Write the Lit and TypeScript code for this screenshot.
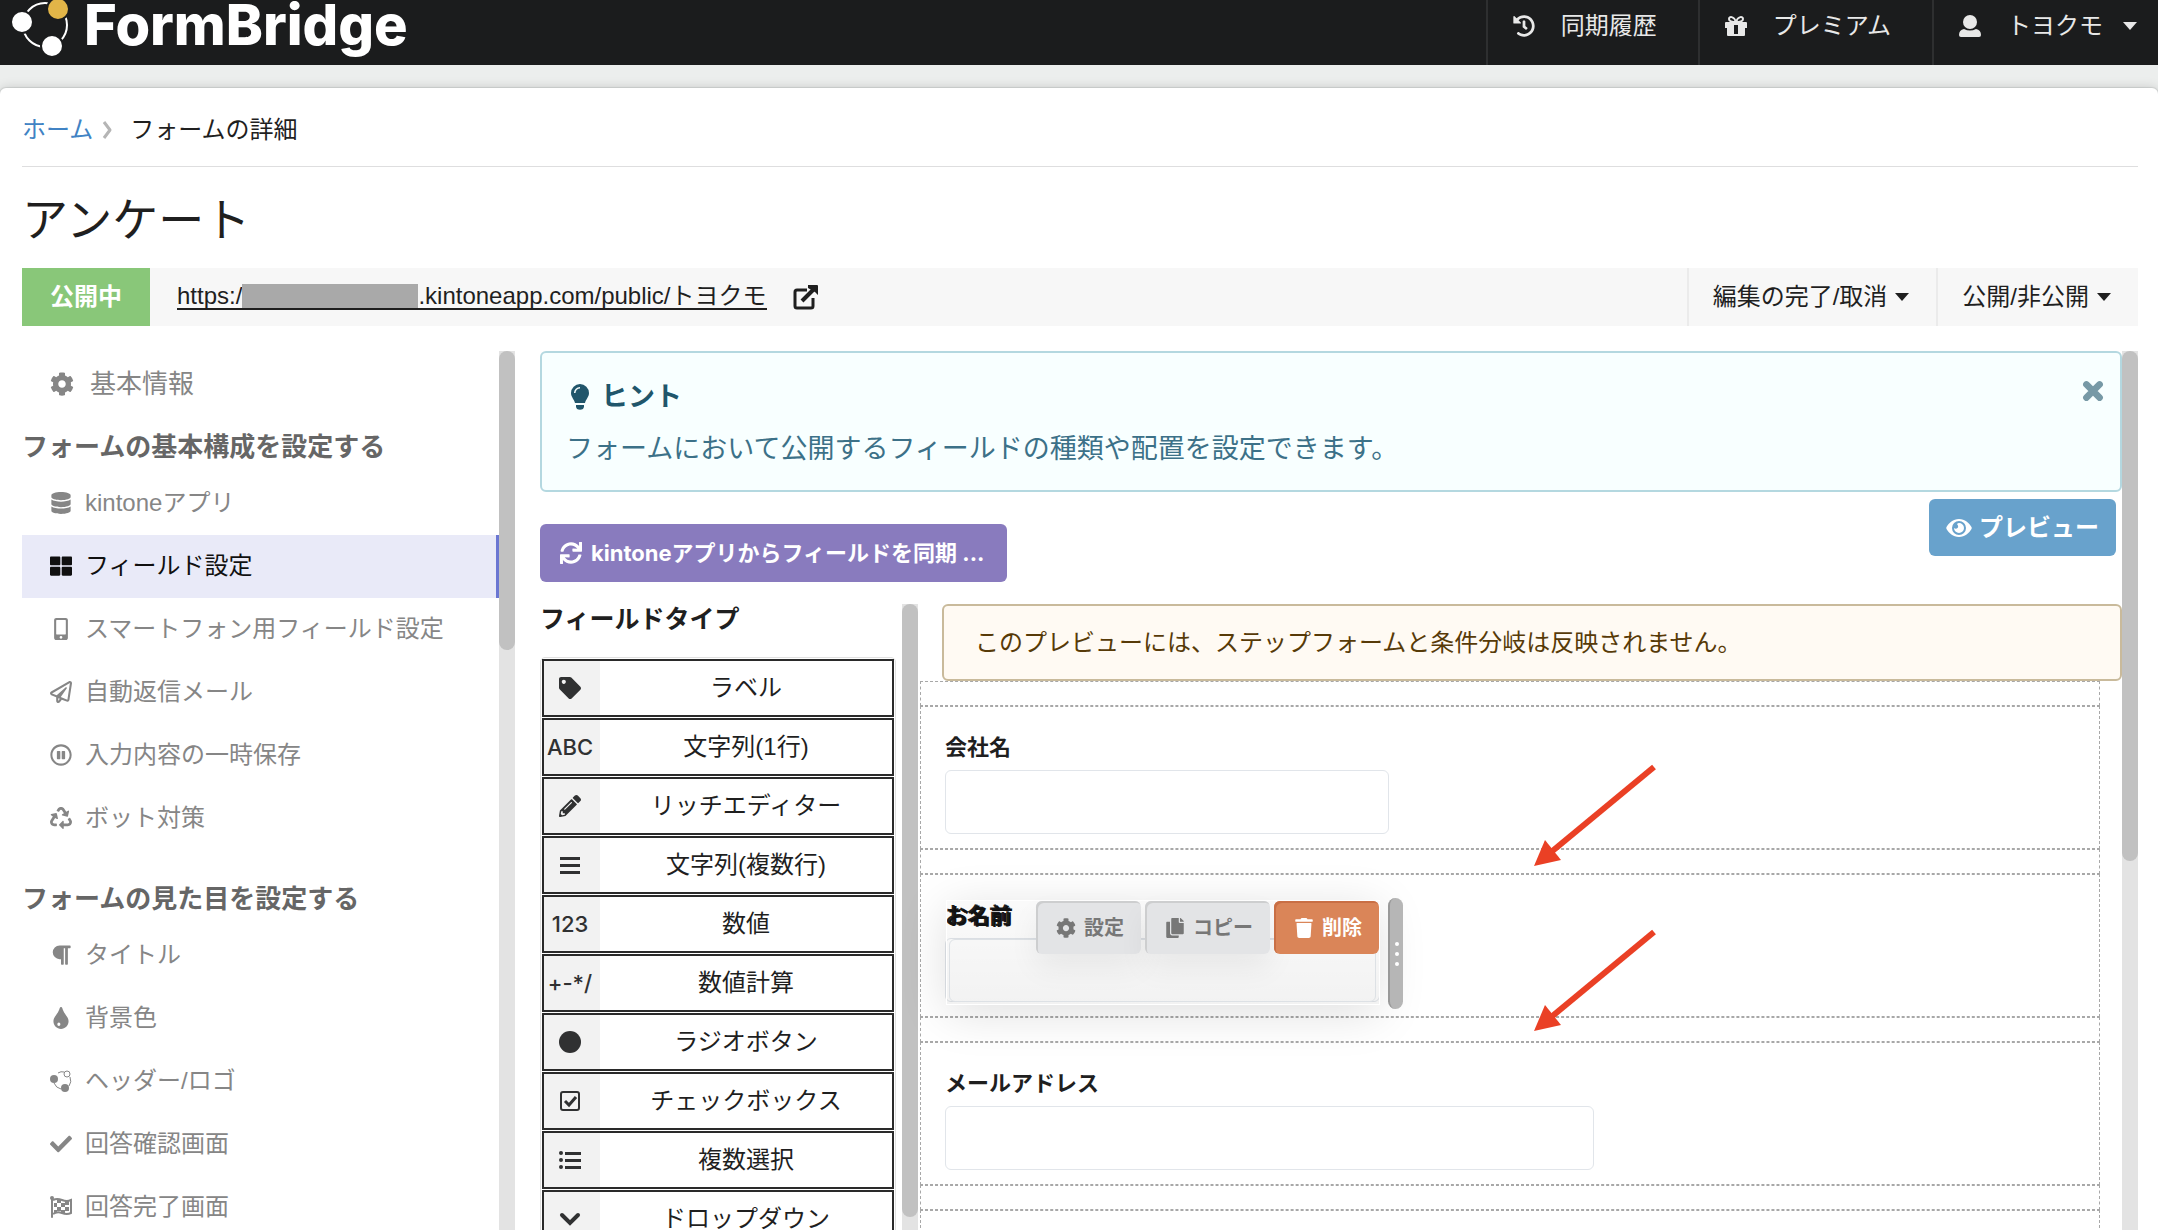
import { LitElement, html, css, svg, nothing, type TemplateResult, type SVGTemplateResult } from "lit";
import { customElement, property } from "lit/decorators.js";
import { classMap } from "lit/directives/class-map.js";

interface Glyph {
  box: string;
  body: SVGTemplateResult;
}

const COG =
  "M487.4 315.7l-42.6-24.6c4.3-23.2 4.3-47 0-70.2l42.6-24.6c4.9-2.8 7.1-8.6 5.5-14-11.1-35.6-30-67.8-54.7-94.6-3.8-4.1-10-5.1-14.8-2.3L380.8 110c-17.9-15.4-38.5-27.3-60.8-35.1V25.8c0-5.6-3.9-10.5-9.4-11.7-36.7-8.2-74.3-7.8-109.2 0-5.5 1.2-9.4 6.1-9.4 11.7V75c-22.2 7.9-42.8 19.8-60.8 35.1L88.7 85.5c-4.9-2.8-11-1.9-14.8 2.3-24.7 26.7-43.6 58.9-54.7 94.6-1.7 5.4.6 11.2 5.5 14L67.3 221c-4.3 23.2-4.3 47 0 70.2l-42.6 24.6c-4.9 2.8-7.1 8.6-5.5 14 11.1 35.6 30 67.8 54.7 94.6 3.8 4.1 10 5.1 14.8 2.3l42.6-24.6c17.9 15.4 38.5 27.3 60.8 35.1v49.2c0 5.6 3.9 10.5 9.4 11.7 36.7 8.2 74.3 7.8 109.2 0 5.5-1.2 9.4-6.1 9.4-11.7v-49.2c22.2-7.9 42.8-19.8 60.8-35.1l42.6 24.6c4.9 2.8 11 1.9 14.8-2.3 24.7-26.7 43.6-58.9 54.7-94.6 1.5-5.5-.7-11.3-5.6-14.1zM256 336c-44.1 0-80-35.9-80-80s35.9-80 80-80 80 35.9 80 80-35.9 80-80 80z";

const glyphs: Record<string, Glyph> = {
  cog: { box: "0 0 512 512", body: svg`<path d=${COG} />` },
  database: {
    box: "0 0 448 512",
    body: svg`<path d="M448 73.143v45.714C448 159.143 347.667 192 224 192S0 159.143 0 118.857V73.143C0 32.857 100.333 0 224 0s224 32.857 224 73.143zM448 176v102.857C448 319.143 347.667 352 224 352S0 319.143 0 278.857V176c48.125 33.143 136.208 48.572 224 48.572S399.874 209.143 448 176zm0 160v102.857C448 479.143 347.667 512 224 512S0 479.143 0 438.857V336c48.125 33.143 136.208 48.572 224 48.572S399.874 369.143 448 336z" />`,
  },
  blocks: {
    box: "0 0 512 512",
    body: svg`<path d="M296 32h192c13.255 0 24 10.745 24 24v160c0 13.255-10.745 24-24 24H296c-13.255 0-24-10.745-24-24V56c0-13.255 10.745-24 24-24zm-80 0H24C10.745 32 0 42.745 0 56v160c0 13.255 10.745 24 24 24h192c13.255 0 24-10.745 24-24V56c0-13.255-10.745-24-24-24zM0 296v160c0 13.255 10.745 24 24 24h192c13.255 0 24-10.745 24-24V296c0-13.255-10.745-24-24-24H24c-13.255 0-24 10.745-24 24zm296 184h192c13.255 0 24-10.745 24-24V296c0-13.255-10.745-24-24-24H296c-13.255 0-24 10.745-24 24v160c0 13.255 10.745 24 24 24z" />`,
  },
  phone: {
    box: "0 0 320 512",
    body: svg`<path d="M272 0H48C21.5 0 0 21.5 0 48v416c0 26.5 21.5 48 48 48h224c26.5 0 48-21.5 48-48V48c0-26.5-21.5-48-48-48zM160 480c-17.7 0-32-14.3-32-32s14.3-32 32-32 32 14.3 32 32-14.3 32-32 32zm112-108c0 6.600-5.4 12-12 12H60c-6.6 0-12-5.4-12-12V60c0-6.600 5.4-12 12-12h200c6.600 0 12 5.4 12 12v312z" />`,
  },
  plane: {
    box: "0 0 512 512",
    body: svg`<path d="M440 6.5L24 246.4c-34.4 19.9-31.1 70.8 5.7 85.9L144 379.6V464c0 46.4 59.2 65.5 86.6 28.6l43.8-59.1 111.9 46.2c5.9 2.4 12.1 3.6 18.3 3.6 8.2 0 16.3-2.1 23.6-6.2 12.8-7.2 21.6-20 23.9-34.5l59.4-387.2c6.1-40.1-36.9-68.8-71.5-48.9zM192 464v-64.6l36.6 15.1L192 464zm212.6-28.7l-153.8-63.5L391 169.5c10.7-15.5-9.5-33.5-23.7-21.2L155.8 332.6 48 288 464 48l-59.4 387.3z" />`,
  },
  pause: {
    box: "0 0 512 512",
    body: svg`<path d="M256 8C119 8 8 119 8 256s111 248 248 248 248-111 248-248S393 8 256 8zm0 448c-110.5 0-200-89.5-200-200S145.5 56 256 56s200 89.5 200 200-89.5 200-200 200zm96-280v160c0 8.800-7.2 16-16 16h-48c-8.8 0-16-7.2-16-16V176c0-8.800 7.2-16 16-16h48c8.800 0 16 7.2 16 16zm-112 0v160c0 8.800-7.2 16-16 16h-48c-8.8 0-16-7.2-16-16V176c0-8.800 7.2-16 16-16h48c8.800 0 16 7.2 16 16z" />`,
  },
  recycle: {
    box: "0 0 512 512",
    body: svg`<path d="M184.561 261.903c3.232 13.997-12.123 24.635-24.068 17.168l-40.736-25.455-50.867 81.402C55.606 356.273 70.96 384 96.012 384H148c6.627 0 12 5.373 12 12v40c0 6.627-5.373 12-12 12H96.115c-75.334 0-121.302-83.048-81.408-146.88l50.822-81.388-40.725-25.448c-12.081-7.547-8.966-25.961 4.879-29.158l110.237-25.45c8.611-1.988 17.201 3.381 19.189 11.99l25.452 110.237zm98.561-182.915l41.289 66.076-40.74 25.457c-12.051 7.528-9 25.953 4.879 29.158l110.237 25.45c8.672 1.999 17.215-3.438 19.189-11.99l25.45-110.237c3.197-13.844-11.99-24.719-24.068-17.168l-40.687 25.424-41.263-66.082c-37.521-60.033-125.209-60.171-162.816 0l-17.963 28.766c-3.51 5.62-1.8 13.021 3.82 16.533l33.919 21.195c5.62 3.512 13.024 1.803 16.536-3.817l17.961-28.743c12.712-20.341 41.973-19.676 54.257-.022zM497.288 301.12l-27.515-44.065c-3.511-5.623-10.916-7.334-16.538-3.821l-33.861 21.159c-5.62 3.512-7.33 10.915-3.818 16.536l27.564 44.112c13.257 21.211-2.057 48.96-27.136 48.96H320V336.02c0-14.213-17.242-21.383-27.313-11.313l-80 79.981c-6.249 6.248-6.249 16.379 0 22.627l80 79.989C302.689 517.308 320 510.3 320 495.989V448h95.88c75.274 0 121.335-82.997 81.408-146.88z" />`,
  },
  paragraph: {
    box: "0 0 448 512",
    body: svg`<path d="M448 48v32a16 16 0 0 1-16 16h-48v368a16 16 0 0 1-16 16h-32a16 16 0 0 1-16-16V96h-32v368a16 16 0 0 1-16 16h-32a16 16 0 0 1-16-16V352h-32a160 160 0 0 1 0-320h240a16 16 0 0 1 16 16z" />`,
  },
  drop: {
    box: "0 0 352 512",
    body: svg`<path fill-rule="evenodd" d="M205 22c-8-29-49-30-58 0C100 180 0 223 0 334c0 98 79 178 176 178s176-80 176-178c0-112-100-153-147-312zM126 360a36 40 0 1 1 0 80 36 40 0 0 1 0-80z" />`,
  },
  nodes: {
    box: "0 0 22 22",
    body: svg`<path d="M8 3q3-2 6-1M20 7q2 5-1 9M11 19Q6 18 4 13" fill="none" stroke="currentColor" stroke-width="1" /><circle cx="4" cy="9" r="4" /><circle cx="15" cy="18" r="4" /><circle cx="17" cy="4" r="3" fill="#fff" stroke="currentColor" stroke-width="1" />`,
  },
  check: {
    box: "0 0 512 512",
    body: svg`<path d="M173.898 439.404l-166.4-166.4c-9.997-9.997-9.997-26.206 0-36.204l36.203-36.204c9.997-9.998 26.207-9.998 36.204 0L192 312.69 432.095 72.596c9.997-9.997 26.207-9.997 36.204 0l36.203 36.204c9.997 9.997 9.997 26.206 0 36.204l-294.4 294.401c-9.998 9.997-26.207 9.997-36.204-.001z" />`,
  },
  flag: {
    box: "0 0 22 22",
    body: svg`<rect x="1" y="1" width="2" height="21" rx="1" /><circle cx="2" cy="2" r="2" /><path d="M3 4q4-2 9 0t9 0v13q-4 2-9 0t-9 1" fill="none" stroke="currentColor" stroke-width="2" /><path d="M7 3h4v4H7zM15 5h4v4h-4zM11 7h4v4h-4zM4 7h3v4H4zM7 11h4v4H7zM15 11h4v4h-4zM11 14h4v3h-4zM4 14h3v3H4z" />`,
  },
  history: {
    box: "0 0 512 512",
    body: svg`<path d="M504 255.531c.253 136.64-111.18 248.372-247.82 248.468-59.015.042-113.223-20.53-155.822-54.911-11.077-8.94-11.905-25.541-1.839-35.607l11.267-11.267c8.609-8.609 22.353-9.551 31.891-1.984C173.062 425.135 212.781 440 256 440c101.705 0 184-82.311 184-184 0-101.705-82.311-184-184-184-48.814 0-93.149 18.969-126.068 49.932l50.754 50.754c10.08 10.08 2.941 27.314-11.313 27.314H24c-8.837 0-16-7.163-16-16V38.627c0-14.254 17.234-21.393 27.314-11.314l49.372 49.372C129.209 34.136 189.552 8 256 8c136.81 0 247.747 110.78 248 247.531zm-180.912 78.784l9.823-12.63c8.138-10.463 6.253-25.542-4.21-33.679L288 256.349V152c0-13.255-10.745-24-24-24h-16c-13.255 0-24 10.745-24 24v135.651l65.409 50.874c10.463 8.137 25.541 6.253 33.679-4.21z" />`,
  },
  gift: {
    box: "0 0 22 22",
    body: svg`<path fill-rule="evenodd" d="M1 7h20q1 0 1 1v5h-2v7q0 1-1 1H3q-1 0-1-1v-7H0V8q0-1 1-1zM9 10v9h4v-9z" /><path d="M11 7C9 1 4 1 4 4q0 3 7 3zM11 7c2-6 7-6 7-3q0 3-7 3z" fill="none" stroke="currentColor" stroke-width="2" />`,
  },
  user: {
    box: "0 0 22 22",
    body: svg`<ellipse cx="11" cy="7" rx="7" ry="7" /><path d="M5 14q6 3 12 0 5 1 5 6 0 2-2 2H2q-2 0-2-2 0-5 5-6z" />`,
  },
  external: {
    box: "0 0 26 26",
    body: svg`<path d="M14 6H4q-2 0-2 2v14q0 2 2 2h14q2 0 2-2v-8" fill="none" stroke="currentColor" stroke-width="3" /><path d="M9 17L21 5" stroke="currentColor" stroke-width="4" /><path d="M15 1h9q1 0 1 1v9l-3-3-7-4z" />`,
  },
  bulb: {
    box: "0 0 18 26",
    body: svg`<path fill-rule="evenodd" d="M9 0a9 9 0 0 1 9 9c0 4-3 6-4 10H4C3 15 0 13 0 9a9 9 0 0 1 9-9zM9 3a6 6 0 0 0-6 6h1.500a4.500 4.500 0 0 1 4.500-4.500z" /><path d="M5 21h8v2l-1 2q-3 1.500-6 0l-1-2z" />`,
  },
  sync: {
    box: "0 0 512 512",
    body: svg`<path d="M440.935 12.574l3.966 82.766C399.416 41.904 331.674 8 256 8 134.813 8 33.933 94.924 12.296 209.824 10.908 217.193 16.604 224 24.103 224h49.084c5.57 0 10.377-3.842 11.676-9.259C103.407 137.408 172.931 80 256 80c60.893 0 114.512 30.856 146.104 77.801l-101.53-4.865c-6.845-.328-12.574 5.133-12.574 11.986v47.411c0 6.627 5.373 12 12 12h200.333c6.627 0 12-5.373 12-12V12c0-6.627-5.373-12-12-12h-47.411c-6.853 0-12.315 5.729-11.987 12.574zM256 432c-60.895 0-114.517-30.858-146.109-77.805l101.868 4.871c6.845.327 12.573-5.134 12.573-11.986v-47.412c0-6.627-5.373-12-12-12H12c-6.627 0-12 5.373-12 12V500c0 6.627 5.373 12 12 12h47.385c6.863 0 12.328-5.745 11.985-12.599l-4.129-82.575C112.725 470.166 180.405 504 256 504c121.187 0 222.067-86.924 243.704-201.824 1.388-7.369-4.308-14.176-11.807-14.176h-49.084c-5.57 0-10.377 3.842-11.676 9.259C408.593 374.592 339.069 432 256 432z" />`,
  },
  eye: {
    box: "0 0 26 18",
    body: svg`<path fill-rule="evenodd" d="M13 0c6 0 10 4 12.500 8q.5 1 0 2c-2.500 4-6.500 8-12.500 8S3 14 .5 10q-.5-1 0-2C3 4 7 0 13 0zm0 2a7 7 0 1 0 0 14 7 7 0 0 0 0-14z" /><path d="M13 4a5 5 0 1 1-5 5q2 1.500 3.500 0T11 5q1-1 2-1z" />`,
  },
  tag: {
    box: "0 0 512 512",
    body: svg`<path d="M0 252.118V48C0 21.49 21.49 0 48 0h204.118a48 48 0 0 1 33.941 14.059l211.882 211.882c18.745 18.745 18.745 49.137 0 67.882L293.823 497.941c-18.745 18.745-49.137 18.745-67.882 0L14.059 286.059A48 48 0 0 1 0 252.118zM112 64c-26.51 0-48 21.49-48 48s21.49 48 48 48 48-21.49 48-48-21.49-48-48-48z" />`,
  },
  pencil: {
    box: "0 0 512 512",
    body: svg`<path d="M497.9 142.1l-46.1 46.1c-4.7 4.7-12.3 4.7-17 0l-111-111c-4.7-4.7-4.7-12.3 0-17l46.1-46.1c18.7-18.7 49.1-18.7 67.9 0l60.1 60.1c18.8 18.7 18.8 49.1 0 67.9zM284.2 99.8L21.6 362.4.4 483.9c-2.9 16.4 11.4 30.6 27.8 27.8l121.5-21.3 262.6-262.6c4.7-4.7 4.7-12.3 0-17l-111-111c-4.8-4.7-12.4-4.7-17.1 0zM124.1 339.9c-5.5-5.5-5.5-14.3 0-19.8l154-154c5.5-5.5 14.3-5.5 19.8 0s5.5 14.3 0 19.8l-154 154c-5.5 5.5-14.3 5.5-19.8 0zM88 424h48v36.3l-64.5 11.3-31.1-31.1L51.7 376H88v48z" />`,
  },
  bars: {
    box: "0 0 22 22",
    body: svg`<path d="M1 3h20v3H1zM1 10h20v3H1zM1 17h20v3H1z" />`,
  },
  dot: { box: "0 0 22 22", body: svg`<circle cx="11" cy="11" r="11" />` },
  checkbox: {
    box: "0 0 22 22",
    body: svg`<rect x="2" y="2" width="18" height="18" rx="2" fill="none" stroke="currentColor" stroke-width="2" /><path d="M6 11l4 4 7-8" fill="none" stroke="currentColor" stroke-width="3" />`,
  },
  list: {
    box: "0 0 22 22",
    body: svg`<circle cx="2" cy="4" r="2" /><circle cx="2" cy="11" r="2" /><circle cx="2" cy="18" r="2" /><path d="M6 3h16v3H6zM6 10h16v3H6zM6 17h16v3H6z" />`,
  },
  down: {
    box: "0 0 22 22",
    body: svg`<path d="M3 7l8 8 8-8" fill="none" stroke="currentColor" stroke-width="4" stroke-linecap="round" />`,
  },
  right: {
    box: "0 0 10 18",
    body: svg`<path d="M2 1l6 8-6 8" fill="none" stroke="currentColor" stroke-width="3" stroke-linejoin="round" />`,
  },
  caret: { box: "0 0 14 8", body: svg`<path d="M0 0h14L7 8z" />` },
  times: {
    box: "0 0 20 20",
    body: svg`<path d="M4 4l12 12M16 4L4 16" fill="none" stroke="currentColor" stroke-width="6" stroke-linecap="round" />`,
  },
  copy: {
    box: "0 0 448 512",
    body: svg`<path d="M320 448v40c0 13.255-10.745 24-24 24H24c-13.255 0-24-10.745-24-24V120c0-13.255 10.745-24 24-24h72v296c0 30.879 25.121 56 56 56h168zm0-344V0H152c-13.255 0-24 10.745-24 24v368c0 13.255 10.745 24 24 24h272c13.255 0 24-10.745 24-24V128H344c-13.2 0-24-10.8-24-24zm120.971-31.029L375.029 7.029A24 24 0 0 0 358.059 0H352v96h96v-6.059a24 24 0 0 0-7.029-16.97z" />`,
  },
  trash: {
    box: "0 0 448 512",
    body: svg`<path d="M0 84V56c0-13.3 10.7-24 24-24h112l9.4-18.7c4-8.2 12.3-13.3 21.4-13.3h114.3c9.1 0 17.4 5.1 21.5 13.3L312 32h112c13.3 0 24 10.7 24 24v28c0 6.600-5.4 12-12 12H12C5.4 96 0 90.6 0 84zm415.200 56.700L394.800 467c-1.6 25.300-22.600 45-47.900 45H101.100c-25.300 0-46.300-19.700-47.900-45L32.800 140.700c-.4-6.900 5.100-12.700 12-12.700h358.500c6.800 0 12.300 5.800 11.900 12.700z" />`,
  },
};

@customElement("fb-icon")
class FbIcon extends LitElement {
  static styles = css`
    :host {
      display: inline-flex;
      flex: none;
      align-items: center;
      justify-content: center;
      width: 22px;
      height: 22px;
    }
    .glyph {
      display: block;
      width: 100%;
      height: 100%;
      fill: currentColor;
    }
  `;

  @property() name = "";

  render() {
    const glyph = glyphs[this.name];
    if (!glyph) return nothing;
    return html`<svg class="glyph" viewBox=${glyph.box} aria-hidden="true">${glyph.body}</svg>`;
  }
}

interface MenuEntry {
  icon: string;
  label: string;
  active?: boolean;
}

const basicMenu: MenuEntry[] = [
  { icon: "database", label: "kintoneアプリ" },
  { icon: "blocks", label: "フィールド設定", active: true },
  { icon: "phone", label: "スマートフォン用フィールド設定" },
  { icon: "plane", label: "自動返信メール" },
  { icon: "pause", label: "入力内容の一時保存" },
  { icon: "recycle", label: "ボット対策" },
];

const lookMenu: MenuEntry[] = [
  { icon: "paragraph", label: "タイトル" },
  { icon: "drop", label: "背景色" },
  { icon: "nodes", label: "ヘッダー/ロゴ" },
  { icon: "check", label: "回答確認画面" },
  { icon: "flag", label: "回答完了画面" },
];

interface FieldType {
  icon?: string;
  mark?: string;
  label: string;
}

const fieldTypes: FieldType[] = [
  { icon: "tag", label: "ラベル" },
  { mark: "ABC", label: "文字列(1行)" },
  { icon: "pencil", label: "リッチエディター" },
  { icon: "bars", label: "文字列(複数行)" },
  { mark: "123", label: "数値" },
  { mark: "+-*/", label: "数値計算" },
  { icon: "dot", label: "ラジオボタン" },
  { icon: "checkbox", label: "チェックボックス" },
  { icon: "list", label: "複数選択" },
  { icon: "down", label: "ドロップダウン" },
];

@customElement("app-root")
class AppRoot extends LitElement {
  static styles = css`
    :host {
      display: flex;
      flex-direction: column;
      height: 100vh;
      overflow: hidden;
      background: #eceeed;
      color: #1f1f1f;
      font-family: "Liberation Sans", "Noto Sans CJK JP", sans-serif;
      font-size: 24px;
      line-height: 32px;
    }
    * {
      box-sizing: border-box;
    }
    button,
    input {
      font: inherit;
      color: inherit;
      margin: 0;
    }
    button {
      border: 0;
      background: none;
      padding: 0;
      white-space: nowrap;
      cursor: pointer;
    }
    a {
      color: inherit;
      text-decoration: none;
    }
    ul {
      list-style: none;
      margin: 0;
      padding: 0;
    }
    .caret {
      width: 14px;
      height: 8px;
    }

    /* top bar */
    .topbar {
      display: flex;
      flex: none;
      justify-content: space-between;
      height: 65px;
      background: #1b1c1d;
      color: #e8e8e8;
    }
    .brand {
      display: flex;
      align-items: flex-start;
      gap: 12px;
      padding-left: 8px;
    }
    .brand-mark {
      width: 64px;
      height: 60px;
    }
    .brand-name {
      color: #fff;
      font-family: Inter, sans-serif;
      font-weight: 800;
      font-size: 56px;
      line-height: 50px;
    }
    .nav {
      display: flex;
    }
    .nav-item {
      display: flex;
      align-items: center;
      gap: 26px;
      padding: 0 41px 13px 25px;
      border-left: 2px solid #2e2f30;
    }
    .nav-item.account {
      padding-right: 21px;
    }
    .nav-item .caret {
      margin-left: -6px;
    }

    /* page sheet */
    .sheet {
      display: flex;
      flex: 1;
      flex-direction: column;
      min-height: 0;
      margin-top: 23px;
      padding: 0 20px 0 22px;
      border-radius: 6px 6px 0 0;
      background: #fff;
      box-shadow: 0 0 12px rgba(0, 0, 0, 0.16), 0 0 1px 1px rgba(34, 36, 38, 0.1);
    }
    .crumbs {
      display: flex;
      flex: none;
      align-items: center;
      height: 79px;
      padding-top: 5px;
      border-bottom: 1px solid #dededf;
    }
    .crumb-link {
      color: #4183c4;
    }
    .crumb-sep {
      width: 10px;
      height: 18px;
      margin: 0 18px 0 9px;
      color: #b5b5b5;
    }
    .title {
      flex: none;
      margin: 0;
      padding-top: 20px;
      height: 101px;
      font-size: 46px;
      line-height: 66px;
      font-weight: 400;
    }
    .statusbar {
      display: flex;
      flex: none;
      align-items: stretch;
      height: 58px;
      background: #f7f7f7;
    }
    .state {
      display: flex;
      align-items: center;
      padding: 0 28px;
      background: #89c779;
      color: #fff;
      font-weight: 700;
    }
    .address {
      display: flex;
      flex: 1;
      align-items: center;
      gap: 26px;
      padding-left: 27px;
    }
    .url {
      display: flex;
      align-items: center;
      height: 26px;
      border-bottom: 2px solid #1f1f1f;
    }
    .mask {
      width: 176px;
      height: 24px;
      background: #a9a9a9;
    }
    .external {
      width: 26px;
      height: 26px;
    }
    .drop {
      display: flex;
      align-items: center;
      gap: 8px;
      padding: 0 27px 0 24px;
      border-left: 2px solid #ebebeb;
    }

    /* columns */
    .columns {
      display: flex;
      flex: 1;
      min-height: 0;
      padding-top: 25px;
    }
    .scroll {
      flex: none;
      width: 16px;
      background: #e3e3e3;
    }
    .thumb {
      border-radius: 8px;
      background: #c1c1c1;
    }
    .thumb.menu {
      height: 34%;
    }
    .thumb.palette {
      height: 98%;
    }
    .thumb.page {
      height: 58%;
    }
    .sidebar {
      flex: none;
      width: 477px;
      overflow: hidden;
      color: #868686;
    }
    .entry {
      display: flex;
      align-items: center;
      gap: 13px;
      height: 63px;
      padding: 0 0 2px 28px;
    }
    .entry.large {
      gap: 16px;
      height: 66px;
      padding-bottom: 0;
      font-size: 26px;
    }
    .entry.large fb-icon {
      width: 24px;
      height: 24px;
    }
    .entry.active {
      border-right: 3px solid #6a76d2;
      background: #e9eaf8;
      color: #101010;
    }
    .group {
      margin: 0;
      height: 55px;
      padding-top: 6px;
      color: #666;
      font-size: 26px;
      line-height: 49px;
      font-weight: 700;
    }
    .menu-list + .group {
      margin-top: 19px;
    }
    .content {
      display: flex;
      flex: 1;
      flex-direction: column;
      min-width: 0;
      margin-left: 25px;
      overflow: hidden;
    }
    .hint {
      display: flex;
      flex: none;
      justify-content: space-between;
      height: 141px;
      padding: 27px 16px 0 24px;
      border: 2px solid #b4d8e0;
      border-radius: 6px;
      background: #f8ffff;
      color: #276f86;
    }
    .hint-head {
      display: flex;
      align-items: center;
      gap: 12px;
      margin: 0;
      padding-left: 5px;
      color: #21566b;
      font-size: 27px;
      line-height: 34px;
      font-weight: 700;
    }
    .bulb {
      width: 18px;
      height: 26px;
    }
    .hint-text {
      margin: 0;
      padding-top: 18px;
      color: #3c7188;
      font-size: 27px;
      line-height: 34px;
    }
    .close {
      display: flex;
      align-items: flex-start;
      height: 24px;
      color: #7799a6;
    }
    .close fb-icon {
      width: 22px;
      height: 22px;
    }
    .actions {
      display: flex;
      flex: none;
      align-items: flex-start;
      justify-content: space-between;
      height: 112px;
      padding: 7px 6px 0 0;
    }
    .action {
      display: flex;
      align-items: center;
      height: 58px;
      border-radius: 6px;
      color: #fff;
      font-weight: 700;
    }
    .action.sync {
      gap: 9px;
      margin-top: 25px;
      padding: 0 23px 0 20px;
      background: #897bbe;
      font-family: Inter, "Noto Sans CJK JP", sans-serif;
      font-size: 22px;
    }
    .action.preview {
      gap: 7px;
      height: 57px;
      padding: 0 17px;
      background: #68a2cc;
    }
    .eye {
      width: 26px;
      height: 18px;
    }
    .builder {
      display: flex;
      flex: 1;
      min-height: 0;
    }
    .palette-pane {
      flex: none;
      width: 362px;
      overflow: hidden;
    }
    .palette-title {
      margin: 0 0 22px;
      font-size: 25px;
      line-height: 31px;
      font-weight: 700;
    }
    .palette-list {
      display: flex;
      flex-direction: column;
      gap: 1px;
      width: 356px;
      padding: 1px;
      border: 1px solid #e0e0e0;
      border-radius: 5px;
    }
    .type {
      display: flex;
      width: 100%;
      height: 58px;
      border: 2px solid #2a2a2a;
      background: #fff;
    }
    .type-icon {
      display: flex;
      flex: none;
      align-items: center;
      justify-content: center;
      align-self: stretch;
      width: 56px;
      padding-right: 4px;
      background: #f2f2f2;
      color: #303132;
      font-family: Inter, sans-serif;
      font-size: 22px;
      font-weight: 500;
    }
    .type-name {
      flex: 1;
      align-self: center;
      text-align: center;
    }
    .stage {
      position: relative;
      flex: 1;
      min-width: 0;
      margin-left: 2px;
    }
    .warning {
      margin: 0 0 0 22px;
      height: 77px;
      padding: 21px 31px;
      border: 2px solid #c9ba9b;
      border-radius: 6px;
      background: #fffaf3;
      color: #573a08;
    }
    .rows {
      margin-right: 22px;
    }
    .slot,
    .row {
      border: 1px dashed #a8a8a8;
    }
    .slot {
      height: 25px;
    }
    .row {
      position: relative;
      height: 143px;
      padding: 25px 24px 0;
    }
    .label {
      display: block;
      height: 38px;
      font-size: 22px;
      line-height: 32px;
      font-weight: 700;
    }
    .field {
      display: block;
      width: 435px;
      height: 64px;
      border: 1px solid #e1e5ea;
      border-radius: 6px;
      background: #fff;
      padding: 0 16px;
    }
    .field.wide {
      width: 649px;
    }
    .field.short {
      width: 444px;
    }

    /* field being dragged: the translucent copy lies over the original */
    .ghost {
      position: absolute;
      left: 25px;
      top: 25px;
      width: 434px;
      height: 105px;
      border: 1px solid #fff;
      box-shadow: 0 8px 48px rgba(0, 0, 0, 0.13);
      background: linear-gradient(180deg, rgba(0, 0, 0, 0.02), rgba(0, 0, 0, 0.05));
    }
    .ghost-label {
      display: block;
      color: #111;
      font-size: 22px;
      line-height: 32px;
      font-weight: 700;
    }
    .ghost-field {
      margin: 6px 3px 0 2px;
      height: 63px;
      border: 1px solid #dde1e5;
      border-radius: 6px;
    }
    .tools {
      position: absolute;
      right: 0;
      top: 0;
      display: flex;
      gap: 4px;
    }
    .tool {
      display: flex;
      align-items: center;
      gap: 8px;
      height: 53px;
      padding: 0 17px 0 20px;
      border-radius: 6px;
      background: #e3e4e6;
      box-shadow: inset 2px 2px 0 #cdcecf, 0 14px 30px rgba(0, 0, 0, 0.06);
      color: #777;
      font-size: 20px;
      font-weight: 700;
    }
    .tool fb-icon {
      width: 20px;
      height: 20px;
    }
    .tool.delete {
      background: #da8558;
      box-shadow: inset 2px 2px 0 #c96f45;
      color: #fff;
    }
    .grip {
      position: absolute;
      left: 467px;
      top: 23px;
      display: flex;
      flex-direction: column;
      align-items: center;
      justify-content: center;
      gap: 6px;
      width: 15px;
      height: 111px;
      border-left: 2px solid #999;
      border-radius: 8px;
      background: #b6b6b6;
    }
    .grip-dot {
      width: 4px;
      height: 4px;
      border-radius: 2px;
      background: #fff;
    }
    .arrow {
      position: absolute;
      left: 614px;
      width: 124px;
      height: 104px;
    }
    .arrow.first {
      top: 160px;
    }
    .arrow.second {
      top: 325px;
    }
  `;

  private entry(item: MenuEntry): TemplateResult {
    return html`<li>
      <a class=${classMap({ entry: true, active: !!item.active })} href="#">
        <fb-icon name=${item.icon}></fb-icon><span>${item.label}</span>
      </a>
    </li>`;
  }

  private fieldType(item: FieldType): TemplateResult {
    return html`<li>
      <button class="type" type="button">
        <span class="type-icon">${item.icon ? html`<fb-icon name=${item.icon}></fb-icon>` : item.mark}</span>
        <span class="type-name">${item.label}</span>
      </button>
    </li>`;
  }

  private arrow(place: string): TemplateResult {
    return html`<svg class="arrow ${place}" viewBox="0 0 124 104" aria-hidden="true">
      <path d="M120 3L16 89" stroke="#ea4025" stroke-width="6" />
      <path d="M0 102L11 76 27 96z" fill="#ea4025" />
    </svg>`;
  }

  render() {
    return html`
      <header class="topbar">
        <a class="brand" href="#">
          <svg class="brand-mark" viewBox="8 0 64 60" aria-hidden="true">
            <circle cx="45" cy="25" r="22" fill="none" stroke="#fff" stroke-width="2" />
            <g stroke="#1b1c1d" stroke-width="2">
              <circle cx="22" cy="22" r="11" fill="#fff" />
              <circle cx="52" cy="46" r="11" fill="#fff" />
              <circle cx="58" cy="9" r="11" fill="#e2b548" />
            </g>
          </svg>
          <span class="brand-name">FormBridge</span>
        </a>
        <nav class="nav">
          <a class="nav-item" href="#"><fb-icon name="history"></fb-icon>同期履歴</a>
          <a class="nav-item" href="#"><fb-icon name="gift"></fb-icon>プレミアム</a>
          <a class="nav-item account" href="#">
            <fb-icon name="user"></fb-icon>トヨクモ<fb-icon class="caret" name="caret"></fb-icon>
          </a>
        </nav>
      </header>
      <main class="sheet">
        <nav class="crumbs">
          <a class="crumb-link" href="#">ホーム</a>
          <fb-icon class="crumb-sep" name="right"></fb-icon>
          <span>フォームの詳細</span>
        </nav>
        <h1 class="title">アンケート</h1>
        <div class="statusbar">
          <span class="state">公開中</span>
          <div class="address">
            <a class="url" href="#"
              ><span>https:/</span><span class="mask"></span><span>.kintoneapp.com/public/トヨクモ</span></a
            >
            <fb-icon class="external" name="external"></fb-icon>
          </div>
          <button class="drop" type="button">編集の完了/取消<fb-icon class="caret" name="caret"></fb-icon></button>
          <button class="drop" type="button">公開/非公開<fb-icon class="caret" name="caret"></fb-icon></button>
        </div>
        <div class="columns">
          <nav class="sidebar">
            <a class="entry large" href="#"><fb-icon name="cog"></fb-icon><span>基本情報</span></a>
            <h2 class="group">フォームの基本構成を設定する</h2>
            <ul class="menu-list">
              ${basicMenu.map((item) => this.entry(item))}
            </ul>
            <h2 class="group">フォームの見た目を設定する</h2>
            <ul class="menu-list">
              ${lookMenu.map((item) => this.entry(item))}
            </ul>
          </nav>
          <div class="scroll"><div class="thumb menu"></div></div>
          <section class="content">
            <div class="hint">
              <div>
                <h2 class="hint-head"><fb-icon class="bulb" name="bulb"></fb-icon>ヒント</h2>
                <p class="hint-text">フォームにおいて公開するフィールドの種類や配置を設定できます。</p>
              </div>
              <button class="close" type="button" aria-label="閉じる"><fb-icon name="times"></fb-icon></button>
            </div>
            <div class="actions">
              <button class="action sync" type="button">
                <fb-icon name="sync"></fb-icon>kintoneアプリからフィールドを同期 ...
              </button>
              <button class="action preview" type="button">
                <fb-icon class="eye" name="eye"></fb-icon>プレビュー
              </button>
            </div>
            <div class="builder">
              <div class="palette-pane">
                <h3 class="palette-title">フィールドタイプ</h3>
                <ul class="palette-list">
                  ${fieldTypes.map((item) => this.fieldType(item))}
                </ul>
              </div>
              <div class="scroll"><div class="thumb palette"></div></div>
              <div class="stage">
                <p class="warning">このプレビューには、ステップフォームと条件分岐は反映されません。</p>
                <div class="rows">
                  <div class="slot"></div>
                  <div class="row">
                    <label class="label" for="company">会社名</label>
                    <input class="field short" id="company" type="text" />
                  </div>
                  <div class="slot"></div>
                  <div class="row">
                    <label class="label" for="person">お名前</label>
                    <input class="field" id="person" type="text" />
                    <div class="ghost">
                      <span class="ghost-label" aria-hidden="true">お名前</span>
                      <div class="ghost-field"></div>
                      <div class="tools">
                        <button class="tool" type="button"><fb-icon name="cog"></fb-icon>設定</button>
                        <button class="tool" type="button"><fb-icon name="copy"></fb-icon>コピー</button>
                        <button class="tool delete" type="button"><fb-icon name="trash"></fb-icon>削除</button>
                      </div>
                    </div>
                    <div class="grip">
                      <span class="grip-dot"></span><span class="grip-dot"></span><span class="grip-dot"></span>
                    </div>
                  </div>
                  <div class="slot"></div>
                  <div class="row">
                    <label class="label" for="mail">メールアドレス</label>
                    <input class="field wide" id="mail" type="email" />
                  </div>
                  <div class="slot"></div>
                  <div class="row"></div>
                </div>
                ${this.arrow("first")} ${this.arrow("second")}
              </div>
            </div>
          </section>
          <div class="scroll"><div class="thumb page"></div></div>
        </div>
      </main>
    `;
  }
}
